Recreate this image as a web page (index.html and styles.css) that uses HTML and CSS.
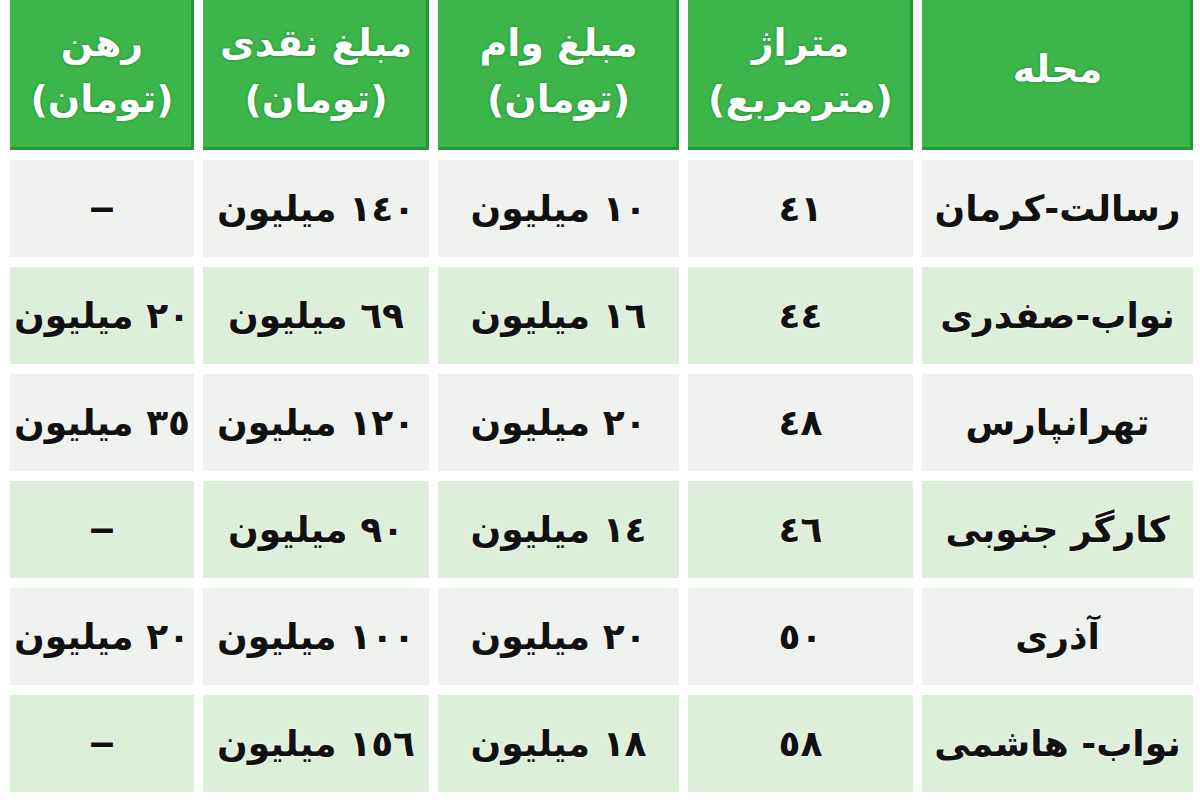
FILE: index.html
```html
<!DOCTYPE html>
<html lang="fa" dir="rtl">
<head>
<meta charset="utf-8">
<title>جدول</title>
<link rel="stylesheet" href="styles.css">
</head>
<body>
<div class="table">
  <div class="cell head single">محله</div>
  <div class="cell head">متراژ<br>(مترمربع)</div>
  <div class="cell head">مبلغ وام<br>(تومان)</div>
  <div class="cell head">مبلغ نقدی<br>(تومان)</div>
  <div class="cell head">رهن<br>(تومان)</div>

  <div class="cell odd">رسالت-کرمان</div>
  <div class="cell odd">٤١</div>
  <div class="cell odd">١٠ میلیون</div>
  <div class="cell odd">١٤٠ میلیون</div>
  <div class="cell odd dash">–</div>

  <div class="cell even">نواب-صفدری</div>
  <div class="cell even">٤٤</div>
  <div class="cell even">١٦ میلیون</div>
  <div class="cell even">٦٩ میلیون</div>
  <div class="cell even">٢٠ میلیون</div>

  <div class="cell odd">تهرانپارس</div>
  <div class="cell odd">٤٨</div>
  <div class="cell odd">٢٠ میلیون</div>
  <div class="cell odd">١٢٠ میلیون</div>
  <div class="cell odd">٣٥ میلیون</div>

  <div class="cell even">کارگر جنوبی</div>
  <div class="cell even">٤٦</div>
  <div class="cell even">١٤ میلیون</div>
  <div class="cell even">٩٠ میلیون</div>
  <div class="cell even dash">–</div>

  <div class="cell odd">آذری</div>
  <div class="cell odd">٥٠</div>
  <div class="cell odd">٢٠ میلیون</div>
  <div class="cell odd">١٠٠ میلیون</div>
  <div class="cell odd">٢٠ میلیون</div>

  <div class="cell even">نواب- هاشمی</div>
  <div class="cell even">٥٨</div>
  <div class="cell even">١٨ میلیون</div>
  <div class="cell even">١٥٦ میلیون</div>
  <div class="cell even dash">–</div>
</div>
</body>
</html>
```

FILE: styles.css
```css
html, body {
  margin: 0;
  padding: 0;
  background: #ffffff;
  width: 1200px;
  height: 800px;
  overflow: hidden;
}

.table {
  direction: rtl;
  display: grid;
  grid-template-columns: 271px 225px 241px 226px 184px;
  grid-template-rows: 150px repeat(6, 97px);
  column-gap: 9px;
  row-gap: 10px;
  padding: 0 7px 0 12px;
  font-family: "DejaVu Sans", sans-serif;
  font-weight: bold;
}

.cell {
  display: flex;
  align-items: center;
  justify-content: center;
  text-align: center;
  white-space: nowrap;
  color: #111111;
  font-size: 36px;
  text-shadow: 0 0 3px #ffffff;
}

.dash {
  font-family: "Liberation Sans", sans-serif;
  font-size: 44px;
  padding-bottom: 4px;
  box-sizing: border-box;
}

.head {
  background: #3cb64b;
  box-shadow: inset -3px -3px 0 #1f9a36;
  color: #ffffff;
  font-size: 38px;
  line-height: 56px;
  padding-bottom: 8px;
  box-sizing: border-box;
  text-shadow: 0 0 3px #1c7a2c;
}

.head.single {
  padding-bottom: 12px;
}

.odd {
  background: #eff2ee;
}

.even {
  background: #ddeeda;
}
```
